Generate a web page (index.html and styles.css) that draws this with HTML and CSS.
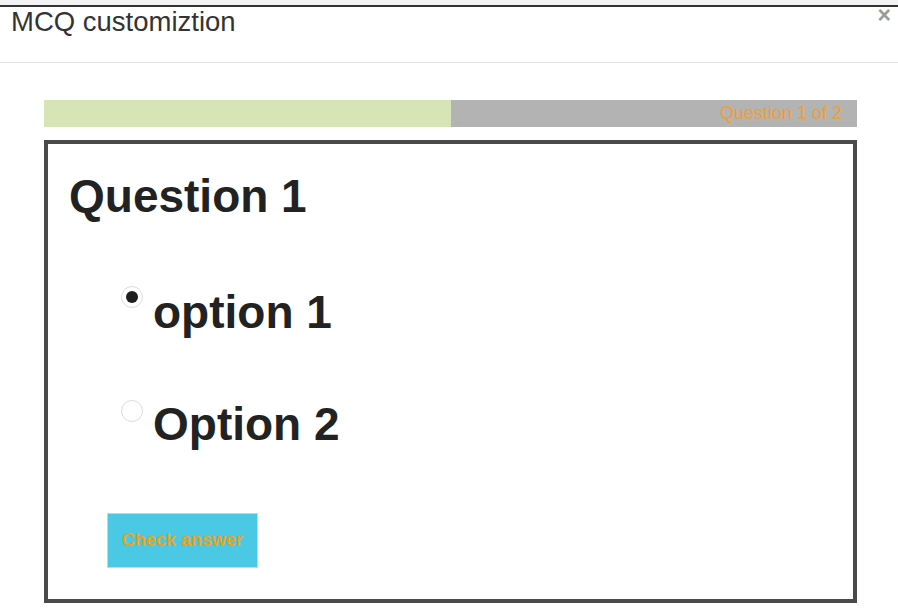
FILE: index.html
```html
<!DOCTYPE html>
<html lang="en">
<head>
<meta charset="utf-8">
<title>MCQ customiztion</title>
<link rel="stylesheet" href="styles.css">
</head>
<body>
<div class="topstrip"></div>
<div class="modal-header">
  <h4 class="modal-title">MCQ customiztion</h4>
  <button class="close" type="button" aria-label="Close">&times;</button>
</div>
<div class="modal-body">
  <div class="progress">
    <div class="progress-fill"></div>
    <div class="progress-rest">Question 1 of 2</div>
  </div>
  <div class="question-box">
    <h1 class="question-title">Question 1</h1>
    <label class="option option-first">
      <input type="radio" name="q1" class="radio" checked>
      <span class="option-text">option 1</span>
    </label>
    <label class="option option-second">
      <input type="radio" name="q1" class="radio">
      <span class="option-text">Option 2</span>
    </label>
    <button class="check-btn" type="button">Check answer</button>
  </div>
</div>
</body>
</html>
```

FILE: styles.css
```css
html, body {
  margin: 0;
  padding: 0;
  background: #ffffff;
  font-family: "Liberation Sans", Arial, sans-serif;
}

.topstrip {
  height: 5px;
  background: #f3f3f3;
  border-bottom: 2px solid #333333;
}

.modal-header {
  display: flex;
  justify-content: space-between;
  align-items: flex-start;
  box-sizing: border-box;
  height: 56px;
  border-bottom: 1px solid #e5e5e5;
}

.modal-title {
  margin: 1px 0 0 11px;
  font-size: 27.5px;
  line-height: 27px;
  font-weight: normal;
  color: #333333;
}

.close {
  margin: 0 7px 0 0;
  padding: 0;
  border: 0;
  background: transparent;
  font-family: "Liberation Sans", Arial, sans-serif;
  font-size: 23px;
  line-height: 16px;
  font-weight: bold;
  color: #9a9a9a;
  cursor: pointer;
}

.modal-body {
  padding: 37px 41px 0 44px;
}

.progress {
  display: flex;
  height: 27px;
}

.progress-fill {
  width: 50%;
  background: #d7e4b5;
}

.progress-rest {
  flex: 1;
  background: #b3b3b3;
  text-align: right;
  padding-right: 15px;
  font-size: 18px;
  line-height: 27px;
  color: #f0a030;
}

.question-box {
  margin-top: 13px;
  border: 4px solid #4a4a4a;
  padding: 26px 0 31px 21px;
  display: flex;
  flex-direction: column;
  align-items: flex-start;
}

.question-title {
  margin: 0;
  font-size: 46px;
  line-height: 52px;
  font-weight: bold;
  color: #222222;
}

.option {
  display: flex;
  align-items: flex-start;
  margin-left: 52px;
  gap: 10px;
  cursor: pointer;
}

.option-first {
  margin-top: 64px;
}

.option-second {
  margin-top: 60px;
}

.option-second .radio {
  margin-top: 2px;
}

.radio {
  appearance: none;
  -webkit-appearance: none;
  width: 22px;
  height: 22px;
  margin: 0;
  border: 1px solid #dcdcdc;
  border-radius: 50%;
  background: #ffffff;
  box-sizing: border-box;
  display: flex;
  align-items: center;
  justify-content: center;
}

.radio:checked::after {
  content: "";
  width: 12px;
  height: 12px;
  border-radius: 50%;
  background: #1e1e1e;
}

.option-text {
  font-size: 46px;
  line-height: 52px;
  font-weight: bold;
  color: #222222;
}

.check-btn {
  margin: 63px 0 0 38px;
  width: 151px;
  height: 55px;
  padding: 0;
  border: 1px solid #a6e2f0;
  background: #4bc8e3;
  font-family: "Liberation Sans", Arial, sans-serif;
  font-size: 18px;
  font-weight: bold;
  color: #e9a21f;
  cursor: pointer;
}
```
